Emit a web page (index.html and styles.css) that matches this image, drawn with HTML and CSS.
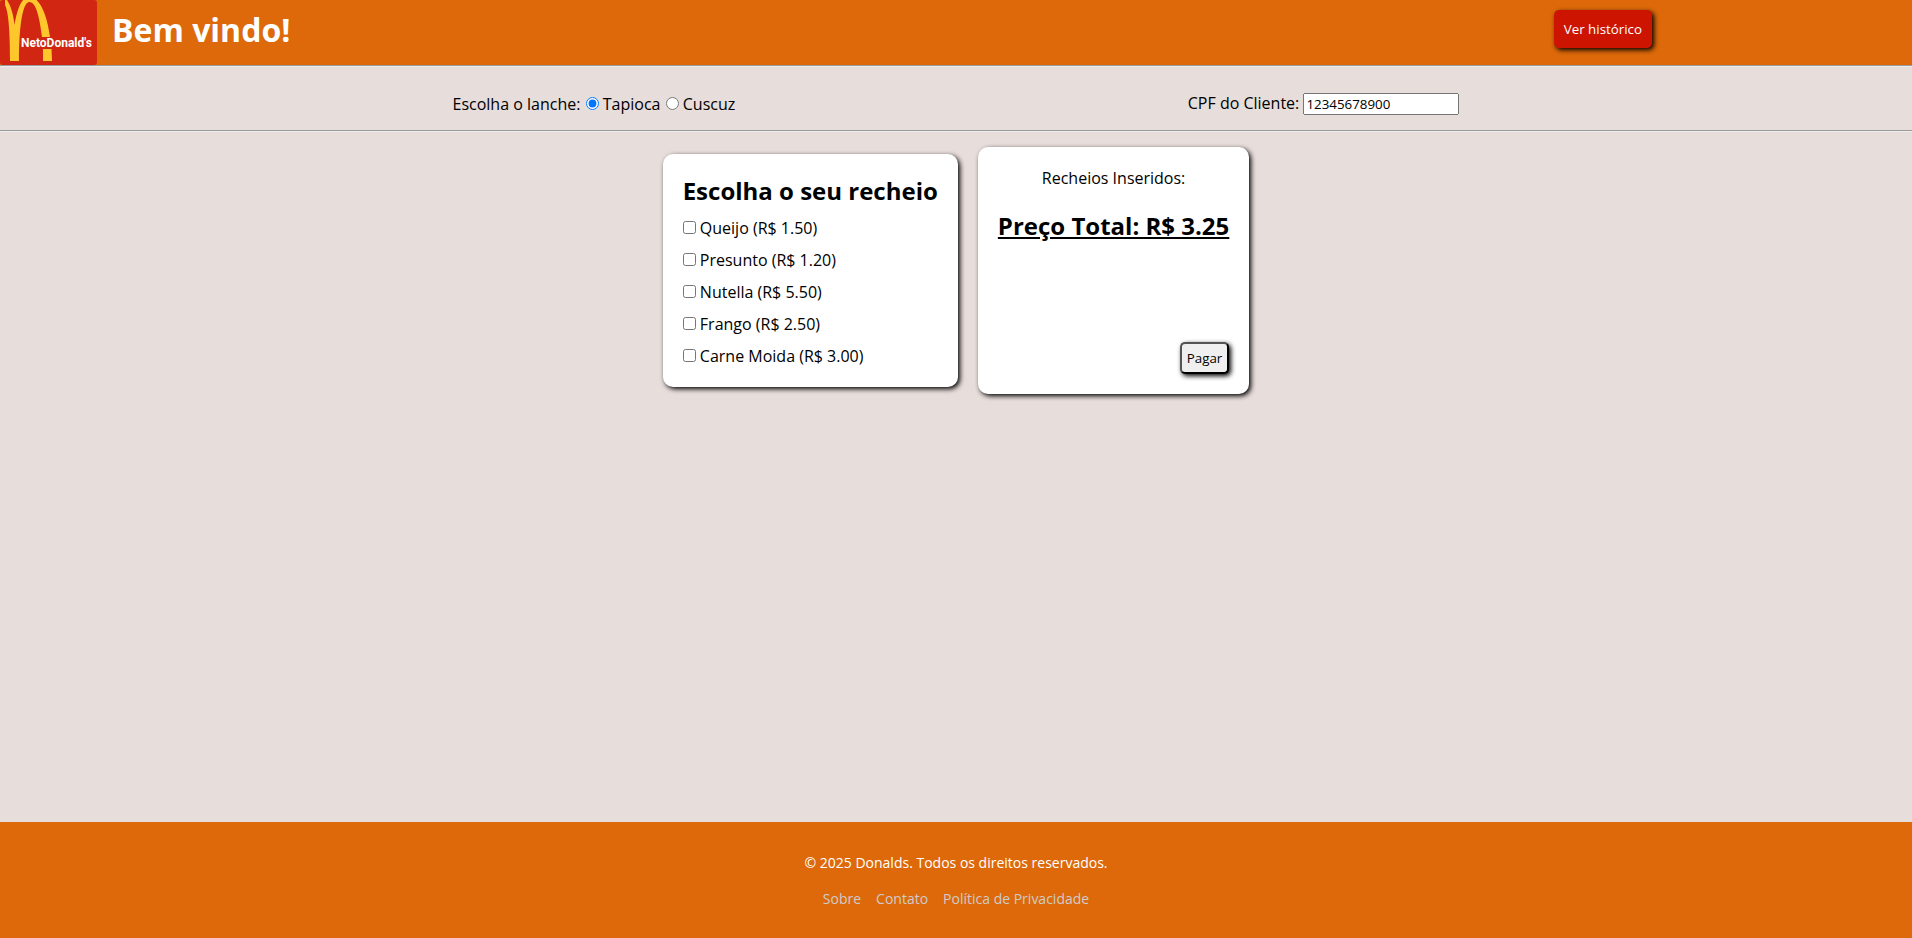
FILE: index.html
```html
<!DOCTYPE html>
<html lang="pt-BR">
<head>
<meta charset="utf-8">
<title>NetoDonald's</title>
<link rel="stylesheet" href="styles.css">
</head>
<body>
<header class="header">
  <svg class="logo" viewBox="0 0 97 65" role="img" aria-label="NetoDonald's">
    <rect width="97" height="65" fill="#d02612"/>
    <path fill="#ffc72c" d="M5 0H7C11 6 13.500 15 14.500 25C17 10 21 -3 29.500 -3C40 -3 47 15 50 37H42C39.500 17 36 2 29.500 2C22 2 19 30 19 61H10C10 36 9 13 5 5Z"/>
    <path fill="#ffc72c" d="M43 49H51.500L52 61H43Z"/>
    <text class="logo-text" x="21" y="47">NetoDonald's</text>
  </svg>
  <h1 class="title">Bem vindo!</h1>
  <button class="history" type="button">Ver histórico</button>
</header>
<hr class="rule">
<form class="options">
  <div>
    Escolha o lanche:
    <input class="radio" type="radio" name="lanche" id="tapioca" checked>
    <label for="tapioca">Tapioca</label>
    <input class="radio" type="radio" name="lanche" id="cuscuz">
    <label for="cuscuz">Cuscuz</label>
  </div>
  <div>
    <label for="cpf">CPF do Cliente:</label>
    <input class="cpf" type="text" id="cpf" value="12345678900">
  </div>
</form>
<hr class="rule">
<main class="cards">
  <section class="card fillings">
    <h2 class="heading">Escolha o seu recheio</h2>
    <div><input class="check" type="checkbox" id="queijo"> <label for="queijo">Queijo (R$ 1.50)</label></div>
    <div><input class="check" type="checkbox" id="presunto"> <label for="presunto">Presunto (R$ 1.20)</label></div>
    <div><input class="check" type="checkbox" id="nutella"> <label for="nutella">Nutella (R$ 5.50)</label></div>
    <div><input class="check" type="checkbox" id="frango"> <label for="frango">Frango (R$ 2.50)</label></div>
    <div><input class="check" type="checkbox" id="carne"> <label for="carne">Carne Moida (R$ 3.00)</label></div>
  </section>
  <section class="card order">
    <p class="inserted">Recheios Inseridos:</p>
    <h2 class="heading total">Preço Total: R$ 3.25</h2>
    <button class="pay" type="button">Pagar</button>
  </section>
</main>
<footer class="footer">
  <p class="copyright">© 2025 Donalds. Todos os direitos reservados.</p>
  <nav class="links">
    <a href="#">Sobre</a>
    <a href="#">Contato</a>
    <a href="#">Política de Privacidade</a>
  </nav>
</footer>
</body>
</html>
```

FILE: styles.css
```css
* {
  box-sizing: border-box;
}

body {
  margin: 0;
  min-height: 100vh;
  display: flex;
  flex-direction: column;
  background: #e7dddb;
  color: #000;
  font: 16px/22px "Open Sans", sans-serif;
}

button,
input {
  font-family: inherit;
}

.header {
  display: flex;
  align-items: flex-start;
  background: #dd690a;
}

.logo {
  width: 97px;
  height: 65px;
  border-radius: 3px;
}

.logo-text {
  fill: #fff;
  font: bold 12px Roboto, sans-serif;
}

.title {
  margin: 8px auto 0 15px;
  color: #fff;
  font-size: 32px;
  line-height: 44px;
}

.history {
  margin: 10px 260px 0 0;
  padding: 10px;
  border: 0;
  border-radius: 5px;
  background: #cc1400;
  box-shadow: 2px 2px 5px #000;
  color: #fff;
  font-size: 13.333px;
}

.rule {
  width: 100%;
  margin: 0;
  border: 0;
  border-top: 1px solid #9a9a9a;
  border-bottom: 1px solid #eee;
}

.options {
  display: flex;
  justify-content: space-evenly;
  align-items: center;
  padding: 25px 0 15px;
}

.radio {
  margin: 3px 0 0 1px;
}

.cpf {
  width: 156px;
  height: 22px;
  padding: 1px;
}

.cards {
  display: flex;
  justify-content: center;
  align-items: center;
  gap: 20px;
  padding: 15px;
}

.card {
  display: flex;
  flex-direction: column;
  padding: 20px;
  border-radius: 10px;
  background: #fff;
  box-shadow: 2px 2px 5px #000;
}

.fillings {
  gap: 10px;
}

.check {
  margin: 3px 0 0;
}

.heading {
  margin: 0;
  font-size: 24px;
  line-height: 33px;
}

.order {
  min-height: 247px;
}

.inserted {
  margin: 0 0 20px;
  text-align: center;
}

.total {
  text-decoration: underline;
}

.pay {
  align-self: flex-end;
  margin-top: auto;
  padding: 5px;
  border: 2px outset #000;
  border-radius: 5px;
  background: #efefef;
  box-shadow: 2px 2px 5px #000;
  color: #000;
  font-size: 13.333px;
}

.footer {
  margin-top: auto;
  padding: 31px 0 30px;
  background: #dd690a;
  color: #fff;
  font-size: 14px;
  line-height: 19px;
  text-align: center;
}

.copyright {
  margin: 0 0 17px;
}

.links {
  display: flex;
  justify-content: center;
  gap: 15px;
}

.links a {
  color: #ccc;
  text-decoration: none;
}
```
